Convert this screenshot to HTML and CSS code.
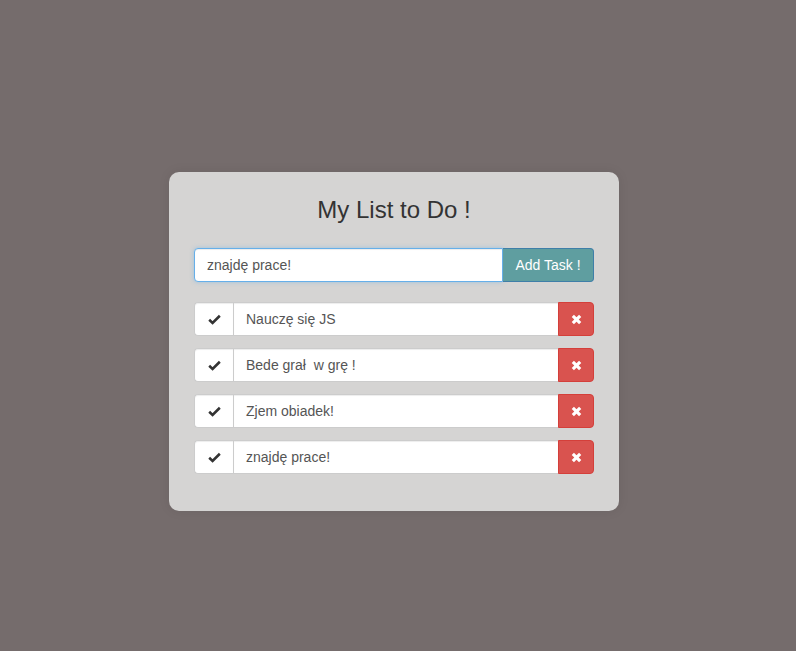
FILE: index.html
```html
<!DOCTYPE html>
<html lang="pl">
<head>
<meta charset="utf-8">
<title>My List to Do !</title>
<link rel="stylesheet" href="styles.css">
</head>
<body>
<div class="page">
  <div class="card">
    <h3 class="title">My List to Do !</h3>
    <div class="input-group">
      <input class="field focused" type="text" value="znajdę prace!">
      <button class="btn-add">Add Task !</button>
    </div>
    <ul class="tasks">
      <li class="task">
        <span class="addon"><svg viewBox="0 0 14 12" width="13" height="11"><path d="M1.2 6.3 L4.9 9.8 L12.8 1.9" fill="none" stroke="#333" stroke-width="2.8" stroke-linejoin="miter"/></svg></span>
        <span class="task-text">Nauczę się JS</span>
        <button class="btn-del"><svg viewBox="0 0 12 12" width="11" height="11"><path d="M2 2 L10 10 M10 2 L2 10" stroke="#fff" stroke-width="3.4"/></svg></button>
      </li>
      <li class="task">
        <span class="addon"><svg viewBox="0 0 14 12" width="13" height="11"><path d="M1.2 6.3 L4.9 9.8 L12.8 1.9" fill="none" stroke="#333" stroke-width="2.8" stroke-linejoin="miter"/></svg></span>
        <span class="task-text">Bede grał&nbsp; w grę !</span>
        <button class="btn-del"><svg viewBox="0 0 12 12" width="11" height="11"><path d="M2 2 L10 10 M10 2 L2 10" stroke="#fff" stroke-width="3.4"/></svg></button>
      </li>
      <li class="task">
        <span class="addon"><svg viewBox="0 0 14 12" width="13" height="11"><path d="M1.2 6.3 L4.9 9.8 L12.8 1.9" fill="none" stroke="#333" stroke-width="2.8" stroke-linejoin="miter"/></svg></span>
        <span class="task-text">Zjem obiadek!</span>
        <button class="btn-del"><svg viewBox="0 0 12 12" width="11" height="11"><path d="M2 2 L10 10 M10 2 L2 10" stroke="#fff" stroke-width="3.4"/></svg></button>
      </li>
      <li class="task">
        <span class="addon"><svg viewBox="0 0 14 12" width="13" height="11"><path d="M1.2 6.3 L4.9 9.8 L12.8 1.9" fill="none" stroke="#333" stroke-width="2.8" stroke-linejoin="miter"/></svg></span>
        <span class="task-text">znajdę prace!</span>
        <button class="btn-del"><svg viewBox="0 0 12 12" width="11" height="11"><path d="M2 2 L10 10 M10 2 L2 10" stroke="#fff" stroke-width="3.4"/></svg></button>
      </li>
    </ul>
  </div>
</div>
</body>
</html>
```
FILE: styles.css
```css
* { box-sizing: border-box; }
html, body {
  margin: 0;
  height: 100%;
  background: #756c6c;
  font-family: "Liberation Sans", Arial, sans-serif;
  font-size: 14px;
  color: #333;
}
.page {
  padding: 172px 0 0 169px;
}
.card {
  width: 450px;
  background: #d5d4d3;
  border-radius: 10px;
  padding: 25px 25px 37px;
  box-shadow: 0 0 12px rgba(0,0,0,0.08);
}
.title {
  margin: 0 0 25px;
  font-size: 24px;
  line-height: 26px;
  font-weight: 400;
  text-align: center;
  color: #333;
}
.input-group {
  display: flex;
  height: 34px;
}
.field {
  flex: 1;
  min-width: 0;
  height: 34px;
  padding: 6px 12px;
  font-family: inherit;
  font-size: 14px;
  color: #555;
  background: #fff;
  border: 1px solid #ccc;
  border-radius: 4px 0 0 4px;
  outline: none;
}
.field.focused {
  border-color: #66afe9;
  box-shadow: inset 0 1px 1px rgba(0,0,0,.075), 0 0 4px rgba(102,175,233,.5);
}
.btn-add {
  width: 91px;
  height: 34px;
  background: #5f9ea0;
  color: #fff;
  border: 1px solid #3f7fa8;
  border-left: 0;
  border-radius: 0 4px 4px 0;
  font-family: inherit;
  font-size: 14px;
  padding: 0;
}
.tasks {
  list-style: none;
  margin: 20px 0 0;
  padding: 0;
  display: flex;
  flex-direction: column;
  gap: 12px;
}
.task {
  display: flex;
  height: 34px;
}
.addon {
  width: 39px;
  display: flex;
  align-items: center;
  justify-content: center;
  background: #fff;
  border: 1px solid #ccc;
  border-right: 0;
  border-radius: 4px 0 0 4px;
  box-shadow: inset 0 1px 1px rgba(0,0,0,.075);
}
.task-text {
  flex: 1;
  display: flex;
  align-items: center;
  padding: 0 12px;
  background: #fff;
  border: 1px solid #ccc;
  border-right: 0;
  color: #555;
  box-shadow: inset 0 1px 1px rgba(0,0,0,.075);
}
.btn-del {
  width: 36px;
  display: flex;
  align-items: center;
  justify-content: center;
  background: #d9534f;
  border: 1px solid #d43f3a;
  border-radius: 0 4px 4px 0;
  padding: 0;
}
```
